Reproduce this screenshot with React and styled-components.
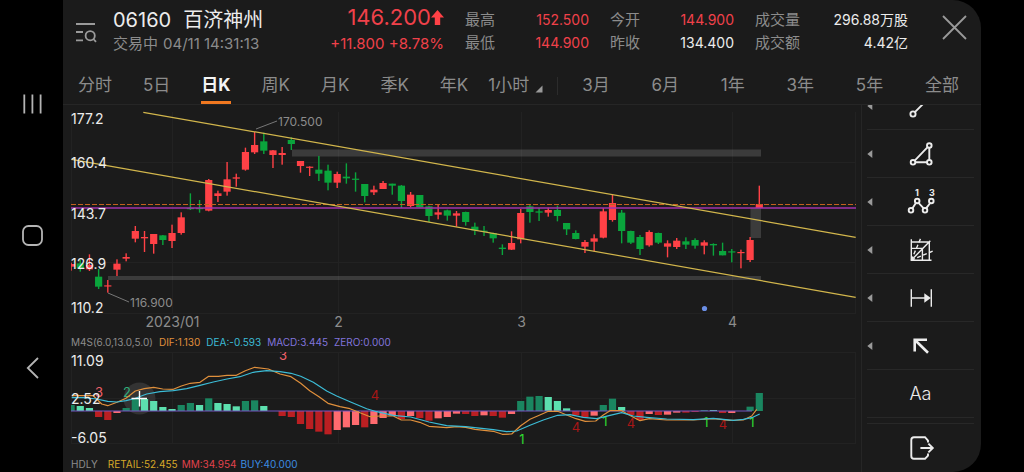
import React from "react";
import styled, { createGlobalStyle } from "styled-components";

const GlobalStyle = createGlobalStyle`
  * { box-sizing: border-box; }
  body {
    margin: 0;
    background: #000;
    color: #ececec;
    font-family: Inter, "Noto Sans CJK SC", sans-serif;
  }
  button {
    margin: 0;
    padding: 0;
    border: 0;
    background: none;
    color: inherit;
    font: inherit;
    cursor: pointer;
  }
  svg { display: block; }
`;

const RED = "#f0414a";
const UP = "#ff4146";
const DOWN = "#0aa53c";

/* ---------- shell ---------- */

const Screen = styled.div`
  display: flex;
  min-height: 100vh;
  padding-right: 43px;
`;

const SystemBar = styled.nav`
  flex: 0 0 63px;
  display: flex;
  flex-direction: column;
  align-items: center;
  justify-content: center;
  gap: 108px;
`;

const SystemButton = styled.button`
  width: 24px;
  height: 24px;
`;

const Panel = styled.main`
  flex: 1;
  min-width: 0;
  display: flex;
  flex-direction: column;
  background: #1b1b1b;
  border-radius: 0 28px 28px 0;
  overflow: hidden;
`;

/* ---------- header ---------- */

const Header = styled.header`
  display: flex;
  padding: 8px 13px 0 12px;
  height: 66px;
`;

const SearchButton = styled.button`
  width: 22px;
  height: 22px;
  margin: 14px 16px 0 0;
`;

const Line = styled.div`
  display: flex;
  align-items: center;
  white-space: nowrap;
  height: ${(p) => (p.$tall ? 24 : 23)}px;
`;

const Title = styled.h1`
  display: flex;
  gap: 12px;
  margin: 0;
  font-size: 20px;
  font-weight: 400;
  line-height: 24px;
`;

const Session = styled.div`
  display: flex;
  gap: 5px;
  color: #8c8c8c;
  font-size: 15px;
  line-height: 22px;
`;

const Quote = styled.div`
  flex: 1;
  display: flex;
  flex-direction: column;
  align-items: flex-end;
  margin-right: 21px;
  color: ${RED};
`;

const Price = styled.div`
  display: flex;
  align-items: center;
  font-size: 22px;
  line-height: 20px;
  height: 24px;
  padding-bottom: 6px;
`;

const Change = styled.div`
  font-size: 15px;
  line-height: 22px;
  white-space: nowrap;
`;

const Stats = styled.dl`
  width: ${(p) => (p.$wide ? 153 : 124)}px;
  margin: 0 21px 0 0;
  font-size: 14px;
  &:last-of-type { margin-right: 34px; }
`;

const Stat = styled.div`
  display: flex;
  justify-content: space-between;
  align-items: center;
  height: 23px;
  line-height: 23px;
  white-space: nowrap;
`;

const StatName = styled.dt`
  color: #8c8c8c;
  font-size: 15px;
`;

const StatValue = styled.dd`
  margin: 0;
  color: ${(p) => (p.$up ? RED : "#ececec")};
`;

const CloseButton = styled.button`
  width: 26px;
  height: 26px;
  margin-top: 7px;
`;

/* ---------- period tabs ---------- */

const Tabs = styled.nav`
  display: flex;
  align-items: stretch;
  height: 39px;
  padding: 0 22px 0 15px;
  border-bottom: 1px solid #262626;
`;

const TabGroup = styled.div`
  display: flex;
  gap: ${(p) => p.$gap || 0}px;
  ${(p) => p.$fill && "flex: 1; justify-content: space-between;"}
`;

const Tab = styled.button`
  position: relative;
  font-size: 17px;
  line-height: 38px;
  white-space: nowrap;
  color: ${(p) => (p.$active ? "#f4f4f4" : "#8c8c8c")};
  font-weight: ${(p) => (p.$active ? 700 : 400)};
  &::after {
    content: "";
    display: ${(p) => (p.$active ? "block" : "none")};
    position: absolute;
    left: 0;
    right: 0;
    bottom: 0;
    height: 3px;
    background: #f07820;
  }
`;

const HourTab = styled(Tab)`
  display: flex;
  align-items: center;
  gap: 6px;
  margin-left: 20px;
`;

const Corner = styled.svg`
  margin-top: 8px;
`;

const TabDivider = styled.span`
  width: 1px;
  height: 18px;
  margin: 11px 24px 0 14px;
  background: #2c2c2c;
`;

/* ---------- body ---------- */

const Body = styled.div`
  flex: 1;
  display: flex;
`;

const Charts = styled.section`
  flex: 1;
  min-width: 0;
`;

const Plot = styled.svg`
  width: 100%;
  height: auto;
`;

const Legend = styled.div`
  display: flex;
  gap: ${(p) => p.$gap}px;
  padding-left: 8px;
  margin-top: ${(p) => p.$top || 0}px;
  font-size: 10px;
  line-height: 15px;
  white-space: nowrap;
`;

const LegendItem = styled.span`
  color: ${(p) => p.$color};
  margin-right: ${(p) => (p.$wide ? 6 : 0)}px;
`;

const Tools = styled.aside`
  flex: 0 0 120px;
  padding: 0 7px 0 5px;
  border-left: 1px solid #262626;
  overflow: hidden;
`;

const Tool = styled.button`
  display: flex;
  align-items: center;
  width: 100%;
  height: 48px;
  border-bottom: 1px solid ${(p) => (p.$last ? "transparent" : "#282828")};
  &:first-child { margin-top: -23px; }
`;

const ToolFace = styled.span`
  flex: 1;
  display: flex;
  justify-content: center;
  margin-right: ${(p) => (p.$single ? 0 : 6)}px;
  font-size: 18px;
  font-weight: 300;
`;

const ToolGap = styled.div`
  height: 6px;
  border-bottom: 1px solid #282828;
`;

/* ---------- data: three chart ticks make one pixel ---------- */

const STEP = 9.176;
const slot = (i) => 8.1 + STEP * i;

/* direction, high, body top, body bottom, low */
const candles = [
  ["r", 488, 492, 500, 512], ["g", 480, 490, 505, 515], ["r", 463, 495, 508, 513],
  ["g", 507, 530, 560, 567], ["r", 540, 556, 559, 578], ["r", 478, 491, 509, 528],
  ["r", 460, 471, 476, 484], ["r", 378, 393, 416, 427], ["r", 393, 411, 415, 456],
  ["r", 402, 402, 432, 461], ["g", 405, 406, 420, 435], ["r", 374, 399, 423, 444],
  ["r", 337, 352, 399, 404], ["g", 280, 324, 327, 330], ["g", 300, 324, 327, 338],
  ["r", 237, 240, 332, 334], ["r", 272, 280, 288, 306], ["r", 186, 238, 275, 287],
  ["r", 221, 232, 236, 260], ["r", 143, 156, 209, 212], ["r", 96, 135, 157, 162],
  ["g", 98, 124, 152, 162], ["r", 150, 151, 165, 204], ["r", 141, 159, 165, 194],
  ["g", 112, 120, 132, 150], ["r", 183, 183, 198, 218], ["r", 199, 200, 203, 228],
  ["g", 168, 209, 221, 243], ["g", 194, 212, 248, 271], ["r", 215, 222, 248, 264],
  ["g", 190, 230, 235, 251], ["g", 217, 236, 239, 275], ["g", 252, 252, 288, 307],
  ["r", 257, 269, 277, 285], ["r", 243, 249, 267, 267], ["g", 251, 251, 257, 284],
  ["g", 255, 257, 303, 324], ["r", 276, 284, 318, 322], ["g", 285, 285, 322, 322],
  ["g", 317, 319, 348, 366], ["r", 315, 337, 344, 358], ["g", 329, 331, 347, 362],
  ["r", 333, 340, 347, 380], ["g", 335, 336, 366, 377], ["g", 368, 380, 391, 405],
  ["g", 378, 392, 395, 408], ["g", 398, 399, 415, 428], ["g", 433, 443, 447, 465],
  ["r", 394, 429, 449, 450], ["r", 327, 339, 418, 430], ["g", 315, 319, 336, 368],
  ["g", 324, 334, 338, 363], ["r", 323, 330, 338, 350], ["g", 317, 330, 348, 364],
  ["g", 369, 369, 388, 405], ["g", 391, 399, 417, 418], ["r", 420, 426, 440, 459],
  ["r", 403, 415, 425, 454], ["r", 324, 334, 413, 415], ["r", 284, 309, 360, 365],
  ["g", 330, 338, 393, 430], ["g", 392, 393, 428, 432], ["g", 405, 411, 447, 465],
  ["r", 391, 396, 436, 440], ["g", 398, 399, 428, 432], ["r", 421, 430, 440, 472],
  ["r", 414, 422, 441, 447], ["g", 412, 424, 434, 447], ["g", 415, 420, 437, 446],
  ["r", 421, 427, 437, 463], ["g", 430, 432, 436, 467], ["g", 428, 453, 466, 466],
  ["g", 447, 454, 457, 487], ["r", 449, 456, 459, 505], ["r", 411, 420, 480, 486],
  ["r", 257, 312, 324, 324],
];

const barFill = { G: "#1a8660", g: "#5ce0ae", R: "#bb1f22", r: "#ff6b6f" };

/* capital letter: growing bar, small letter: shrinking bar; then its end */
const bars = [
  "G225", "g228", "g234", "R261", "R270", "r249", "G234", "G207", "g207", "g213",
  "g231", "g237", "G225", "G219", "g225", "G205", "g219", "g222", "g229", "G213",
  "G211", "g228", "g243", "R258", "R261", "R282", "R297", "R305", "R313", "r300",
  "r292", "r285", "R292", "r282", "r264", "r257", "R267", "r258", "R264", "R272",
  "r265", "r261", "r251", "R252", "R258", "r256", "R258", "R263", "r252", "G213",
  "G200", "G198", "g201", "g213", "g235", "R256", "R262", "r257", "G225", "G206",
  "g231", "R255", "R270", "r252", "R255", "r254", "r248", "R248", "R246", "G240",
  "g240", "R249", "r249", "g243", "G230", "G189",
];

const dif = [
  [35, 197], [100, 197], [125, 222], [143, 227], [171, 217], [198, 205], [226, 183],
  [253, 176], [281, 172], [308, 177], [340, 178], [364, 168], [391, 160], [420, 157],
  [446, 139], [475, 139], [501, 136], [529, 136], [556, 122], [584, 112], [625, 117],
  [660, 132], [693, 140], [722, 160], [749, 182], [777, 200], [804, 220], [840, 230],
  [870, 236], [900, 248], [930, 260], [960, 258], [1000, 258], [1024, 270], [1052, 270],
  [1079, 277], [1107, 289], [1160, 293], [1190, 290], [1217, 292], [1245, 298],
  [1300, 304], [1327, 313], [1355, 312], [1382, 287], [1410, 268], [1438, 256],
  [1465, 244], [1493, 244], [1520, 255], [1548, 266], [1576, 274], [1607, 273],
  [1630, 255], [1650, 242], [1685, 242], [1713, 258], [1740, 272], [1768, 266],
  [1820, 270], [1900, 270], [1960, 266], [2010, 271], [2050, 270], [2075, 258], [2090, 238],
];

const dea = [
  [35, 203], [70, 203], [110, 207], [143, 214], [171, 216], [198, 212], [226, 205],
  [260, 192], [300, 185], [340, 182], [380, 176], [420, 166], [460, 156], [501, 147],
  [540, 140], [580, 127], [620, 122], [660, 125], [693, 130], [722, 139], [760, 157],
  [800, 183], [830, 198], [870, 215], [920, 236], [950, 245], [1000, 256], [1052, 261],
  [1107, 276], [1160, 287], [1217, 290], [1300, 299], [1340, 305], [1370, 303],
  [1410, 286], [1450, 270], [1493, 256], [1530, 254], [1570, 262], [1610, 266],
  [1650, 256], [1685, 248], [1720, 258], [1760, 262], [1820, 267], [1900, 269],
  [1960, 265], [2020, 271], [2050, 268], [2075, 263], [2099, 252],
];

const waveMarks = [
  ["3", 36, 47, "#f0606a"], ["2", 64, 47, "#2fae7c"], ["3", 220, 10, "#f0606a"],
  ["4", 312, 50, "#a81616"], ["1", 459, 94, "#30dc30"], ["4", 513, 82, "#a81616"],
  ["1", 542, 76, "#30dc30"], ["4", 568, 78, "#a81616"], ["1", 643, 77, "#30dc30"],
  ["4", 660, 79, "#a81616"], ["1", 689, 77, "#30dc30"],
];

const months = [["2023/01", 109], ["2", 275], ["3", 458], ["4", 669]];

const toPoints = (pts) =>
  pts.map(([x, y]) => `${(x / 3 - 3).toFixed(1)},${(y / 3 - 20).toFixed(1)}`).join(" ");

function PriceChart() {
  const y = (v) => v / 3 - 5;
  return (
    <Plot viewBox="0 0 798 230" role="img" aria-label="日K">
      <g stroke="#222">
        {[57, 157, 208].map((v) => <path key={v} d={`M8 ${v}.5H793`} />)}
        {[8, 109, 275, 458, 669, 792].map((v) => <path key={v} d={`M${v}.5 7V208`} />)}
      </g>
      <g fill="#fff" fillOpacity="0.14">
        <rect x="229" y="44.5" width="469" height="7" />
        <rect x="45" y="171" width="653" height="4" />
        <rect x="687.5" y="103" width="10.5" height="30" />
      </g>
      <clipPath id="price-area"><rect x="8" y="0" width="786" height="230" /></clipPath>
      <g clipPath="url(#price-area)">
        {candles.map(([dir, high, top, bottom, low], i) => (
          <g key={i} fill={dir === "r" ? UP : DOWN}>
            <rect x={slot(i) - 0.7} y={y(high)} width="1.4" height={(low - high) / 3} />
            <rect x={slot(i) - 3.6} y={y(top)} width="7.2" height={Math.max(1.2, (bottom - top) / 3)} />
          </g>
        ))}
      </g>
      <path d="M8 99.5H793" stroke="#c2611f" strokeDasharray="5 2" strokeWidth="1" />
      <path d="M8 103H793" stroke="#a233ae" strokeWidth="1.6" />
      <path d="M80.3 7.3L792.7 132.3M8.5 54.3L792.7 192.3" stroke="#d2b64c" strokeWidth="1.2" />
      <path d="M193 24L214 16M45 188L66 197" stroke="#777" />
      <circle cx="641.5" cy="203.5" r="2.6" fill="#6b8fe6" />
      <g fill="#ececec" fontSize="14">
        <text x="8" y="19">177.2</text>
        <text x="8" y="63">160.4</text>
        <text x="8" y="114">143.7</text>
        <text x="8" y="164">126.9</text>
        <text x="8" y="208">110.2</text>
      </g>
      <g fill="#8c8c8c" fontSize="12">
        <text x="215" y="21">170.500</text>
        <text x="67" y="202">116.900</text>
      </g>
      <g fill="#8c8c8c" fontSize="14">
        {months.map(([label, x]) => (
          <text key={label} x={x + 0.5} y="222" textAnchor="middle">{label}</text>
        ))}
      </g>
    </Plot>
  );
}

function MacdChart() {
  return (
    <Plot viewBox="0 0 798 100" role="img" aria-label="MACD">
      <g stroke="#222">
        {[2, 48, 93].map((v) => <path key={v} d={`M8 ${v}.5H793`} />)}
        {[8, 109, 275, 458, 669, 792].map((v) => <path key={v} d={`M${v}.5 2V93`} />)}
      </g>
      <circle cx="76.5" cy="48.5" r="16" fill="#333" />
      <clipPath id="macd-area"><rect x="8" y="2" width="786" height="98" /></clipPath>
      <g clipPath="url(#macd-area)">
        {bars.map((bar, i) => {
          const end = Number(bar.slice(1));
          return (
            <rect
              key={i}
              x={slot(i) - 3.6}
              y={Math.min(end, 243) / 3 - 20}
              width="7.2"
              height={Math.abs(end - 243) / 3}
              fill={barFill[bar[0]]}
            />
          );
        })}
        <path d="M8 61H689" stroke="#7656c4" strokeWidth="1.2" />
        <g fontSize="13" textAnchor="middle">
          {waveMarks.map(([mark, x, y, color]) => (
            <text key={x} x={x} y={y} fill={color}>{mark}</text>
          ))}
        </g>
        <g fill="none" strokeWidth="1.2" strokeLinejoin="round">
          <polyline points={toPoints(dif)} stroke="#e0903c" />
          <polyline points={toPoints(dea)} stroke="#3cbcd6" />
        </g>
      </g>
      <g fill="#ececec" fontSize="14">
        <text x="8" y="16">11.09</text>
        <text x="8" y="54">2.52</text>
        <text x="8" y="93">-6.05</text>
      </g>
      <path d="M68.5 48.5H84M76.5 41V56.5" stroke="#fff" strokeWidth="1.4" />
    </Plot>
  );
}

/* ---------- drawing tools ---------- */

function Icon({ children, width = 1.9 }) {
  return (
    <svg
      width="32"
      height="32"
      viewBox="-16 -16 32 32"
      fill="none"
      stroke="#ececec"
      strokeWidth={width}
      aria-hidden="true"
    >
      {children}
    </svg>
  );
}

const tools = [
  ["线段", (
    <Icon>
      <circle cx="-8" cy="8" r="2.6" />
      <path d="M-6.1 6.1L6.1 -6.1" />
      <circle cx="8" cy="-8" r="2.6" />
    </Icon>
  )],
  ["图形", (
    <Icon>
      <circle cx="8.3" cy="-8.5" r="2.3" />
      <circle cx="-8" cy="8.3" r="2.3" />
      <circle cx="8.3" cy="8.3" r="2.3" />
      <path d="M-6.3 6.6L6.6 -6.8M8.3 -6.2V6M-5.7 8.3H6" />
    </Icon>
  )],
  ["波浪", (
    <Icon>
      <circle cx="-10" cy="8.3" r="2.3" />
      <circle cx="-3.8" cy="-1" r="2.3" />
      <circle cx="4" cy="8.3" r="2.3" />
      <circle cx="10.3" cy="-1" r="2.3" />
      <path d="M-8.7 6.4L-5.1 0.9M-2.5 0.9L2.7 6.4M5.1 6.3L9.2 1" />
      <g fill="#ececec" stroke="none" fontSize="9" fontWeight="700" textAnchor="middle">
        <text x="-4" y="-6">1</text>
        <text x="11" y="-6">3</text>
      </g>
    </Icon>
  )],
  ["江恩", (
    <Icon width={1.4}>
      <path d="M-9.7 -10.7V10.2H10.5M-9.7 -8H8.3V10.2M-9.7 -1.6H1.4V10.2M-9.7 10.2L9.3 -9.2" />
      <path d="M-9.7 10.2L0.4 -13.3M-9.7 10.2L13.3 0.5" strokeDasharray="4 2.4" />
    </Icon>
  )],
  ["区间", (
    <Icon width={1.4}>
      <path d="M-9.7 -8.8V8.8M10.3 -8.8V8.8M-9.7 0H5" />
      <path d="M3.3 -4.8L9.8 0L3.3 4.8Z" fill="#ececec" stroke="none" />
    </Icon>
  )],
  ["箭头", (
    <Icon width={2.6}>
      <path d="M6 -6.3H-6.3V5.6M-6.3 -6.3L7 6.8" />
    </Icon>
  )],
];

const hourTab = "1小时";
const dayTabs = ["分时", "5日", "日K", "周K", "月K", "季K", "年K"];
const rangeTabs = ["3月", "6月", "1年", "3年", "5年", "全部"];

const stats = [
  [["最高", "152.500", true], ["最低", "144.900", true]],
  [["今开", "144.900", true], ["昨收", "134.400", false]],
  [["成交量", "296.88万股", false], ["成交额", "4.42亿", false]],
];

export default function App() {
  return (
    <>
      <GlobalStyle />
      <Screen>
        <SystemBar>
          <SystemButton aria-label="最近">
            <svg width="24" height="24" fill="none" stroke="#b4b4b4" strokeWidth="1.8">
              <path d="M4.3 2.5V21.5M12.4 2.5V21.5M20.6 2.5V21.5" />
            </svg>
          </SystemButton>
          <SystemButton aria-label="主页">
            <svg width="24" height="24" fill="none" stroke="#b4b4b4" strokeWidth="1.8">
              <rect x="3" y="2" width="19" height="19" rx="5.5" />
            </svg>
          </SystemButton>
          <SystemButton aria-label="返回">
            <svg width="24" height="24" fill="none" stroke="#b4b4b4" strokeWidth="1.8">
              <path d="M18 2L7.8 12L18 22" />
            </svg>
          </SystemButton>
        </SystemBar>

        <Panel>
          <Header>
            <SearchButton aria-label="搜索">
              <svg width="22" height="22" fill="none" stroke="#9a9a9a" strokeWidth="1.8">
                <path d="M1 2H20M1 10H8M1 18.3H8" />
                <circle cx="15.2" cy="13.7" r="4.6" />
                <path d="M18.4 17L21 19.8" />
              </svg>
            </SearchButton>
            <div>
              <Line $tall>
                <Title><span>06160</span><span>百济神州</span></Title>
              </Line>
              <Line>
                <Session><span>交易中</span><span>04/11 14:31:13</span></Session>
              </Line>
            </div>
            <Quote>
              <Price>
                146.200
                <svg width="13" height="16" viewBox="0 0 13 16" fill={UP} aria-hidden="true">
                  <path d="M6.5 1L13 8.4H9.2V16H3.8V8.4H0Z" />
                </svg>
              </Price>
              <Line>
                <Change>+11.800 +8.78%</Change>
              </Line>
            </Quote>
            {stats.map((pair, i) => (
              <Stats key={i} $wide={i === 2}>
                {pair.map(([name, value, up]) => (
                  <Stat key={name}>
                    <StatName>{name}</StatName>
                    <StatValue $up={up}>{value}</StatValue>
                  </Stat>
                ))}
              </Stats>
            ))}
            <CloseButton aria-label="关闭">
              <svg width="26" height="26" fill="none" stroke="#9a9a9a" strokeWidth="1.8">
                <path d="M1 1L24 24M24 1L1 24" />
              </svg>
            </CloseButton>
          </Header>

          <Tabs>
            <TabGroup $gap={31}>
              {dayTabs.map((t) => (
                <Tab key={t} $active={t === "日K"}>{t}</Tab>
              ))}
            </TabGroup>
            <HourTab>
              {hourTab}
              <Corner width="8" height="8" fill="#9a9a9a" aria-hidden="true">
                <path d="M7.5 0.5V7.5H0.5Z" />
              </Corner>
            </HourTab>
            <TabDivider />
            <TabGroup $fill>
              {rangeTabs.map((t) => <Tab key={t}>{t}</Tab>)}
            </TabGroup>
          </Tabs>

          <Body>
            <Charts>
              <PriceChart />
              <Legend $gap={6}>
                <LegendItem $color="#8c8c8c">M4S(6.0,13.0,5.0)</LegendItem>
                <LegendItem $color="#e0903c">DIF:1.130</LegendItem>
                <LegendItem $color="#3cbcd6">DEA:-0.593</LegendItem>
                <LegendItem $color="#8174dc">MACD:3.445</LegendItem>
                <LegendItem $color="#8174dc">ZERO:0.000</LegendItem>
              </Legend>
              <MacdChart />
              <Legend $top={7} $gap={4}>
                <LegendItem $color="#8c8c8c" $wide>HDLY</LegendItem>
                <LegendItem $color="#d6a828">RETAIL:52.455</LegendItem>
                <LegendItem $color="#e0424c">MM:34.954</LegendItem>
                <LegendItem $color="#3c8ce0">BUY:40.000</LegendItem>
              </Legend>
            </Charts>

            <Tools>
              {tools.map(([name, icon]) => (
                <Tool key={name} aria-label={name}>
                  <svg width="6" height="8" fill="#9a9a9a" aria-hidden="true">
                    <path d="M5.3 0V8L0.3 4Z" />
                  </svg>
                  <ToolFace>{icon}</ToolFace>
                </Tool>
              ))}
              <Tool>
                <ToolFace $single>Aa</ToolFace>
              </Tool>
              <ToolGap />
              <Tool $last aria-label="退出">
                <ToolFace $single>
                  <Icon>
                    <path d="M7 -5.5V-7.5L4 -10.8H-7Q-9.7 -10.8 -9.7 -8V8Q-9.7 10.8 -7 10.8H4L7 7.6V5.5M-0.6 0H11.5M7.4 -4.4L11.8 0L7.4 4.4" />
                  </Icon>
                </ToolFace>
              </Tool>
            </Tools>
          </Body>
        </Panel>
      </Screen>
    </>
  );
}
